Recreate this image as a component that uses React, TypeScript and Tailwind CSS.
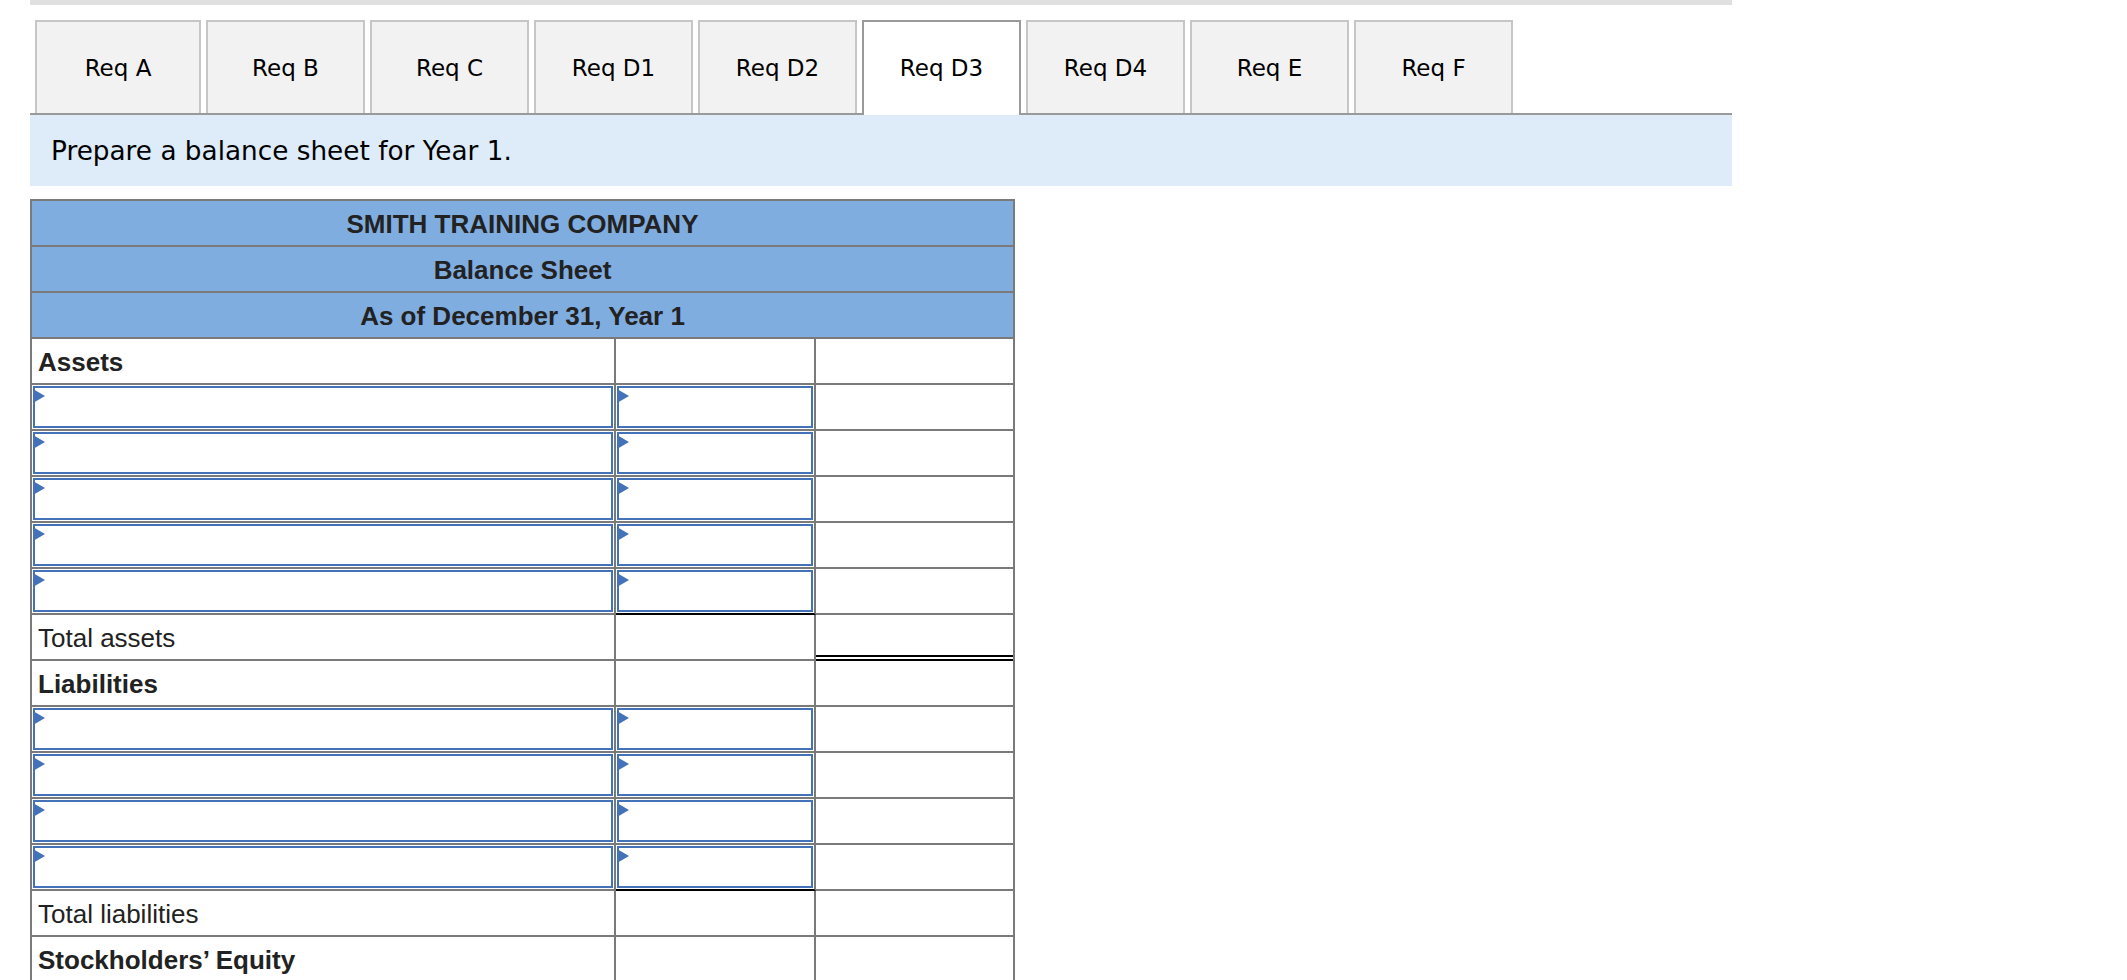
import React from "react";

type Row =
  | { kind: "label"; text: string; bold?: boolean; c3Double?: boolean }
  | { kind: "input"; c2Under?: boolean };

const rows: Row[] = [
  { kind: "label", text: "Assets", bold: true },
  { kind: "input" },
  { kind: "input" },
  { kind: "input" },
  { kind: "input" },
  { kind: "input", c2Under: true },
  { kind: "label", text: "Total assets", c3Double: true },
  { kind: "label", text: "Liabilities", bold: true },
  { kind: "input" },
  { kind: "input" },
  { kind: "input" },
  { kind: "input", c2Under: true },
  { kind: "label", text: "Total liabilities" },
  { kind: "label", text: "Stockholders’ Equity", bold: true },
  { kind: "input" },
  { kind: "input" },
];

const tabs = ["Req A", "Req B", "Req C", "Req D1", "Req D2", "Req D3", "Req D4", "Req E", "Req F"];

function InputBox() {
  return (
    <div className="relative m-[1px] h-[calc(100%-2px)] border-2 border-[#4472b8] bg-white">
      <svg
        className="absolute left-[-2px] top-[1px]"
        width="12"
        height="14"
        viewBox="0 0 12 14"
      >
        <polygon points="0,0 12,7 0,14" fill="#4472b8" />
      </svg>
    </div>
  );
}

function TableRow({ row }: { row: Row }) {
  if (row.kind === "label") {
    return (
      <div className="flex h-[46px]">
        <div className="box-border flex w-[584px] items-center border-r-2 border-b-2 border-[#7a7a7a] pl-[6px] pt-[2px]">
          <span
            className={
              "text-[26px] leading-none text-[#222] " + (row.bold ? "font-bold" : "font-normal")
            }
            style={{ fontFamily: '"Liberation Sans", Arial, sans-serif' }}
          >
            {row.text}
          </span>
        </div>
        <div className="box-border w-[200px] border-r-2 border-b-2 border-[#7a7a7a]" />
        {row.c3Double ? (
          <div className="box-border flex-1 border-b-[6px] border-double border-black" />
        ) : (
          <div className="box-border flex-1 border-b-2 border-[#7a7a7a]" />
        )}
      </div>
    );
  }
  return (
    <div className="flex h-[46px]">
      <div className="box-border w-[584px] border-r-2 border-b-2 border-[#7a7a7a]">
        <InputBox />
      </div>
      <div
        className={
          "box-border w-[200px] border-r-2 border-b-2 border-r-[#7a7a7a] " +
          (row.c2Under ? "border-b-black" : "border-b-[#7a7a7a]")
        }
      >
        <InputBox />
      </div>
      <div className="box-border flex-1 border-b-2 border-[#7a7a7a]" />
    </div>
  );
}

export default function App() {
  return (
    <div className="relative h-[980px] w-[2127px] overflow-hidden bg-white">
      <div className="ml-[30px] w-[1702px]">
        <div className="h-[5px] bg-[#e0e0e0]" />
        <div
          className="mt-[15px] box-border flex h-[95px] items-start gap-[5px] border-b-2 border-[#9a9a9a] pl-[5px]"
          style={{ fontFamily: '"DejaVu Sans", Verdana, sans-serif' }}
        >
          {tabs.map((t, i) => {
            const active = t === "Req D3";
            return (
              <div
                key={t}
                className={
                  "relative box-border flex items-center justify-center border-2 border-b-0 pt-[2px] text-[23px] text-black " +
                  (i === 0 ? "w-[166px] " : "w-[159px] ") +
                  (active
                    ? "z-10 h-[95px] border-[#9a9a9a] bg-white pb-[2px]"
                    : "h-[93px] border-[#c6c6c6] bg-[#f2f2f2]")
                }
              >
                {t}
              </div>
            );
          })}
        </div>
        <div
          className="flex h-[71px] items-center bg-[#ddecf8] pl-[21px] pt-[2px] text-[26.3px] text-black"
          style={{ fontFamily: '"DejaVu Sans", Verdana, sans-serif' }}
        >
          Prepare a balance sheet for Year 1.
        </div>
        <div className="mt-[13px] box-border w-[985px] border-x-2 border-t-2 border-[#7a7a7a]">
          {["SMITH TRAINING COMPANY", "Balance Sheet", "As of December 31, Year 1"].map((h) => (
            <div
              key={h}
              className="box-border flex h-[46px] items-center justify-center border-b-2 border-[#7a7a7a] bg-[#80ade0] pt-[2px] text-[26px] font-bold text-[#222]"
              style={{ fontFamily: '"Liberation Sans", Arial, sans-serif' }}
            >
              {h}
            </div>
          ))}
          {rows.map((r, i) => (
            <TableRow key={i} row={r} />
          ))}
        </div>
      </div>
    </div>
  );
}
